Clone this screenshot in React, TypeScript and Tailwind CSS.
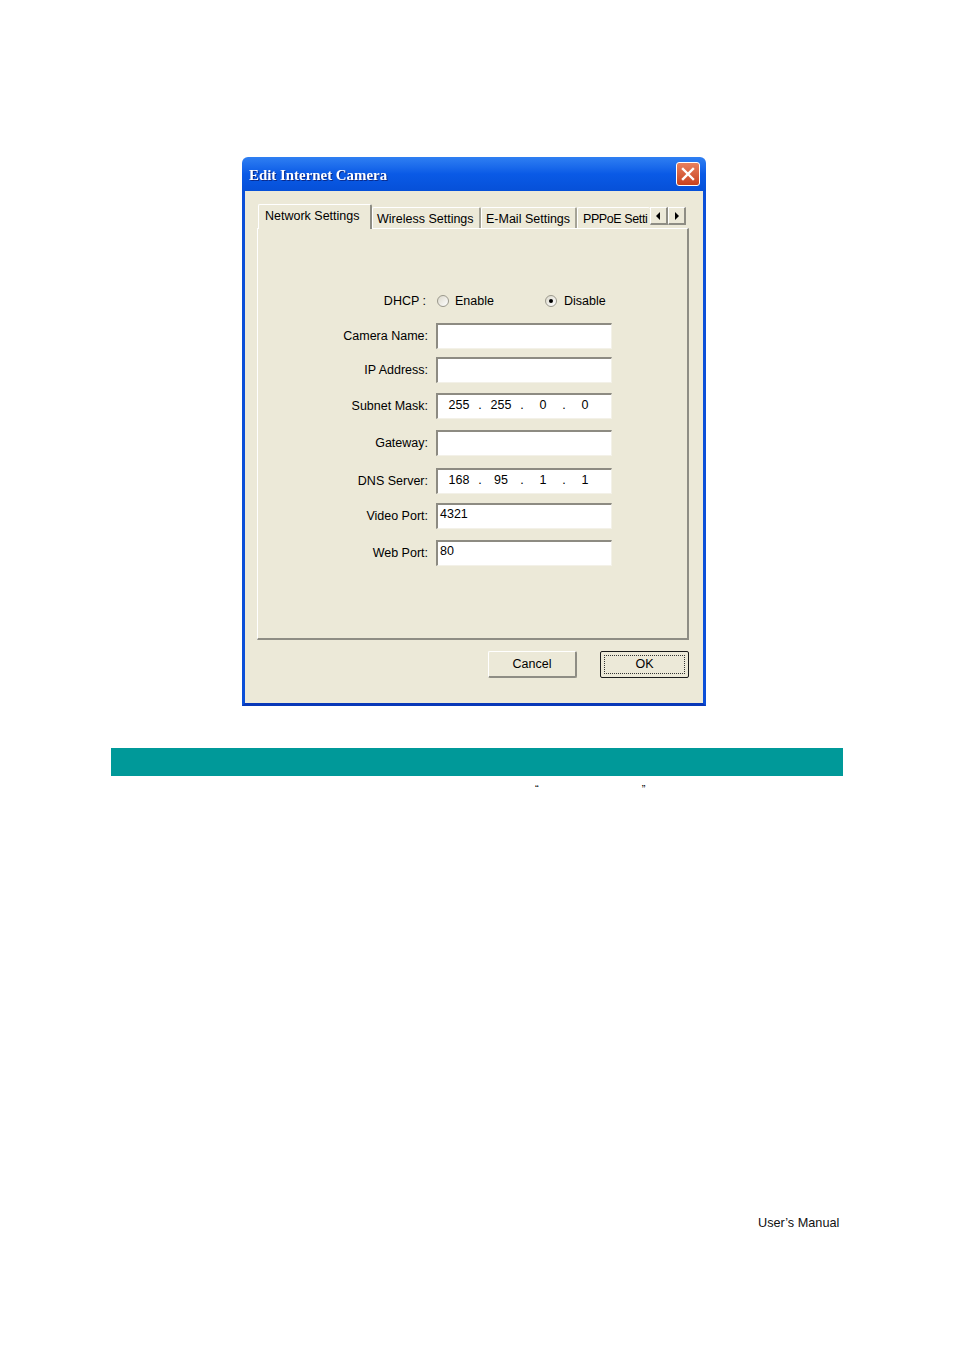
import React from 'react'

const ui = { fontFamily: '"Liberation Sans", Arial, sans-serif' }

const sunken =
  'border-t-2 border-l-2 border-r border-b border-t-[#8d8b82] border-l-[#8d8b82] border-r-[#f3f1e8] border-b-[#f3f1e8] bg-white'

const IpField = ({ parts }: { parts: string[] }) => (
  <div className={`w-[176px] h-[26px] flex items-center pl-[3px] pb-[3px] ${sunken}`}>
    {parts.map((p, i) => (
      <React.Fragment key={i}>
        {i > 0 && <span className="w-[6px] text-center">.</span>}
        <span className="w-[36px] text-center">{p}</span>
      </React.Fragment>
    ))}
  </div>
)

const TextField = ({ value = '' }: { value?: string }) => (
  <div className={`w-[176px] h-[26px] pl-[2px] pt-[1px] leading-[16px] ${sunken}`}>{value}</div>
)

const Row = ({ label, mt, children }: { label: string; mt: string; children: React.ReactNode }) => (
  <div className={`flex items-center gap-[8px] ${mt}`}>
    <div className="w-[170px] text-right">{label}</div>
    {children}
  </div>
)

const Radio = ({ checked }: { checked?: boolean }) => (
  <span className="w-[12px] h-[12px] rounded-full border border-[#9a988c] bg-gradient-to-br from-[#dcd9cc] to-white flex items-center justify-center">
    {checked && <span className="w-[4px] h-[4px] rounded-full bg-black" />}
  </span>
)

const Tab = ({ label, active, w, extra = '' }: { label: string; active?: boolean; w: string; extra?: string }) =>
  active ? (
    <div className={`${w} h-[25px] bg-[#ece9d8] border-l border-t border-white border-r-2 border-r-[#8e8d84] rounded-t-[2px] pl-[6px] pt-[2px] relative z-10 -mb-[1px] whitespace-nowrap`}>
      {label}
    </div>
  ) : (
    <div className={`${w} h-[21px] mt-[3px] border-l border-t border-white border-r-2 border-r-[#a5a396] rounded-t-[2px] pl-[4px] pt-[2px] whitespace-nowrap overflow-hidden ${extra}`}>
      {label}
    </div>
  )

const ArrowBtn = ({ dir }: { dir: 'l' | 'r' }) => (
  <div className="w-[18px] h-[18px] mt-[3px] bg-[#ece9d8] border-l border-t border-white border-r-2 border-b-2 border-r-[#8e8d84] border-b-[#8e8d84] flex items-center justify-center">
    <svg width="5" height="8" viewBox="0 0 5 8">
      {dir === 'l' ? <path d="M4 0 L0 4 L4 8 Z" fill="#000" /> : <path d="M1 0 L5 4 L1 8 Z" fill="#000" />}
    </svg>
  </div>
)

export default function App() {
  return (
    <div className="w-[954px] h-[1350px] bg-white pt-[157px] text-[12.5px] text-black" style={ui}>
      {/* dialog */}
      <div className="ml-[242px] w-[464px] h-[549px] flex flex-col">
        <div className="h-[34px] rounded-t-[6px] bg-gradient-to-b from-[#2f7ff2] via-[#0a5ae6] to-[#0650d8] flex items-center justify-between pl-[7px] pr-[6px]">
          <span
            className="text-white font-bold text-[14.9px] pt-[2px] drop-shadow-[1px_1px_0_#0a2a8a]"
            style={{ fontFamily: '"Liberation Serif", "Times New Roman", serif' }}
          >
            Edit Internet Camera
          </span>
          <div className="w-[24px] h-[24px] rounded-[3px] border border-white bg-gradient-to-b from-[#e8805e] to-[#c8401c] flex items-center justify-center">
            <svg width="14" height="14" viewBox="0 0 14 14">
              <path d="M2 2 L12 12 M12 2 L2 12" stroke="#fff" strokeWidth="2.4" strokeLinecap="square" />
            </svg>
          </div>
        </div>
        <div className="flex-1 border-l-[3px] border-r-[3px] border-b-[3px] border-[#0b4fd8] border-b-[#0838b8] bg-[#ece9d8] pl-[12px] pt-[13px]">
          {/* tabs */}
          <div className="flex h-[24px] ml-[1px]">
            <Tab label="Network Settings" active w="w-[114px]" />
            <Tab label="Wireless Settings" w="w-[109px]" />
            <Tab label="E-Mail Settings" w="w-[96px]" />
            <Tab label="PPPoE Setti" w="w-[73px]" extra="tracking-[-0.4px] !pl-[5px] !border-r-0" />
            <ArrowBtn dir="l" />
            <ArrowBtn dir="r" />
          </div>
          {/* tab panel */}
          <div className="w-[432px] h-[412px] border-l border-t border-white border-r-2 border-b-2 border-r-[#8e8d84] border-b-[#8e8d84] pt-[64px]">
            <div className="flex items-center h-[16px]">
              <div className="w-[170px] text-right pr-[2px]">DHCP :</div>
              <div className="flex items-center ml-[9px] gap-[6px]">
                <Radio />
                <span>Enable</span>
              </div>
              <div className="flex items-center ml-[51px] gap-[7px]">
                <Radio checked />
                <span>Disable</span>
              </div>
            </div>
            <Row label="Camera Name:" mt="mt-[14px]">
              <TextField />
            </Row>
            <Row label="IP Address:" mt="mt-[8px]">
              <TextField />
            </Row>
            <Row label="Subnet Mask:" mt="mt-[10px]">
              <IpField parts={['255', '255', '0', '0']} />
            </Row>
            <Row label="Gateway:" mt="mt-[11px]">
              <TextField />
            </Row>
            <Row label="DNS Server:" mt="mt-[12px]">
              <IpField parts={['168', '95', '1', '1']} />
            </Row>
            <Row label="Video Port:" mt="mt-[9px]">
              <TextField value="4321" />
            </Row>
            <Row label="Web Port:" mt="mt-[11px]">
              <TextField value="80" />
            </Row>
          </div>
          {/* buttons */}
          <div className="w-[432px] flex justify-end gap-[23px] mt-[11px]">
            <button className="w-[89px] h-[27px] bg-[#ece9d8] border-l border-t border-white border-r-2 border-b-2 border-r-[#8e8d84] border-b-[#8e8d84] rounded-[2px] pt-[1px]">
              Cancel
            </button>
            <button className="w-[89px] h-[27px] bg-[#ece9d8] border border-[#1a1a1a] rounded-[2px] p-[3px]">
              <span className="w-full h-full flex items-center justify-center border border-dotted border-[#333]">OK</span>
            </button>
          </div>
        </div>
      </div>

      {/* section band */}
      <div className="ml-[111px] mt-[42px] w-[732px] h-[28px] bg-[#009999]" />
      <div className="ml-[535px] mt-[6px] flex text-[11px] leading-[14px] gap-[103px] text-black">
        <span>“</span>
        <span>”</span>
      </div>

      <div className="ml-[758px] mt-[418px] text-[12.7px] text-[#111]">
        User’s Manual
      </div>
    </div>
  )
}
